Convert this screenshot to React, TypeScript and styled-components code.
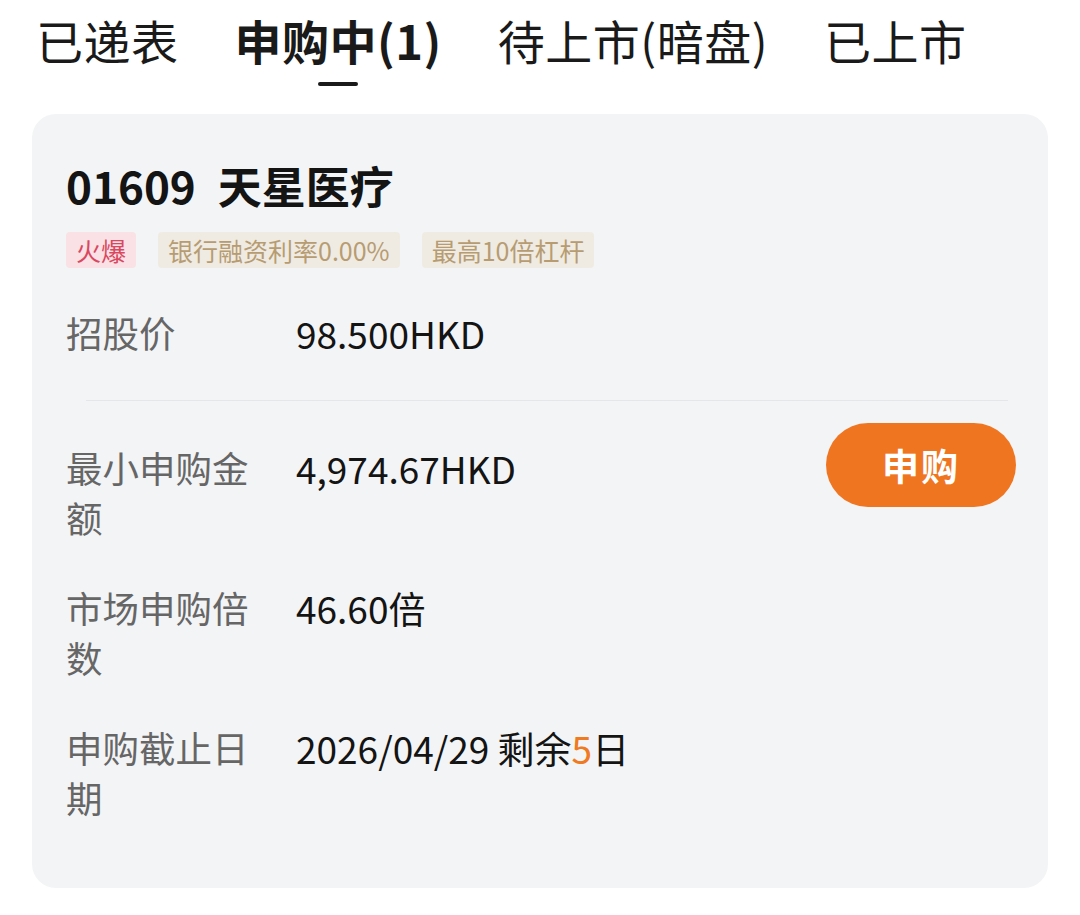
import styled, { createGlobalStyle } from 'styled-components';

const GlobalStyle = createGlobalStyle`
  html, body {
    margin: 0;
    padding: 0;
    background: #ffffff;
    font-family: "Noto Sans CJK SC", "Noto Sans", sans-serif;
  }
`;

const Page = styled.div`
  width: 1080px;
  height: 915px;
  background: #ffffff;
  overflow: hidden;
`;

const TabBar = styled.div`
  display: flex;
  align-items: flex-start;
  gap: 56px;
  padding: 10px 0 0 36px;
  height: 100px;
  box-sizing: border-box;
`;

const Tab = styled.div<{ $active?: boolean }>`
  position: relative;
  font-size: 47px;
  line-height: 60px;
  color: #1a1a1a;
  font-weight: ${p => (p.$active ? 700 : 400)};
  letter-spacing: 0.5px;

  &::after {
    content: '';
    display: ${p => (p.$active ? 'block' : 'none')};
    position: absolute;
    left: 50%;
    top: 72px;
    width: 40px;
    height: 4px;
    margin-left: -20px;
    border-radius: 2px;
    background: #1a1a1a;
  }
`;

const Card = styled.div`
  margin: 14px 32px 0 32px;
  background: #f3f4f6;
  border-radius: 24px;
  padding: 42px 32px 62px 34px;
  height: 774px;
  box-sizing: border-box;
`;

const Title = styled.div`
  font-size: 44px;
  font-weight: 700;
  color: #141414;
  line-height: 58px;
  display: flex;
  gap: 22px;
`;

const TagRow = styled.div`
  display: flex;
  gap: 22px;
  margin-top: 18px;
`;

const Tag = styled.span<{ $tone: 'hot' | 'gold' }>`
  font-size: 25px;
  line-height: 36px;
  padding: 0 10px;
  border-radius: 4px;
  background: ${p => (p.$tone === 'hot' ? '#f9e1e5' : '#efebe3')};
  color: ${p => (p.$tone === 'hot' ? '#d9485f' : '#b79c72')};
`;

const Row = styled.div`
  display: flex;
  align-items: flex-start;
`;

const FirstRow = styled(Row)`
  margin-top: 40px;
`;

const Label = styled.div`
  width: 200px;
  font-size: 36.5px;
  line-height: 50px;
  color: #666666;
  flex-shrink: 0;
`;

const Value = styled.div`
  margin-left: 30px;
  font-size: 37px;
  line-height: 50px;
  color: #141414;
  flex: 1;
`;

const Accent = styled.span`
  color: #ef7a22;
`;

const Divider = styled.div`
  height: 1px;
  background: #e4e6ea;
  margin: 42px 8px 42px 20px;
`;

const RowList = styled.div`
  display: flex;
  flex-direction: column;
  gap: 40px;
`;

const BuyButton = styled.button`
  width: 190px;
  height: 84px;
  margin-top: -20px;
  border: none;
  border-radius: 42px;
  background: #f07520;
  color: #ffffff;
  font-family: inherit;
  font-size: 37px;
  font-weight: 700;
  letter-spacing: 2px;
  cursor: pointer;
`;

export default function App() {
  return (
    <Page>
      <GlobalStyle />
      <TabBar>
        <Tab>已递表</Tab>
        <Tab $active>申购中(1)</Tab>
        <Tab>待上市(暗盘)</Tab>
        <Tab>已上市</Tab>
      </TabBar>
      <Card>
        <Title>
          <span>01609</span>
          <span>天星医疗</span>
        </Title>
        <TagRow>
          <Tag $tone="hot">火爆</Tag>
          <Tag $tone="gold">银行融资利率0.00%</Tag>
          <Tag $tone="gold">最高10倍杠杆</Tag>
        </TagRow>
        <FirstRow>
          <Label>招股价</Label>
          <Value>98.500HKD</Value>
        </FirstRow>
        <Divider />
        <RowList>
          <Row>
            <Label>最小申购金额</Label>
            <Value>4,974.67HKD</Value>
            <BuyButton>申购</BuyButton>
          </Row>
          <Row>
            <Label>市场申购倍数</Label>
            <Value>46.60倍</Value>
          </Row>
          <Row>
            <Label>申购截止日期</Label>
            <Value>
              2026/04/29 剩余<Accent>5</Accent>日
            </Value>
          </Row>
        </RowList>
      </Card>
    </Page>
  );
}
